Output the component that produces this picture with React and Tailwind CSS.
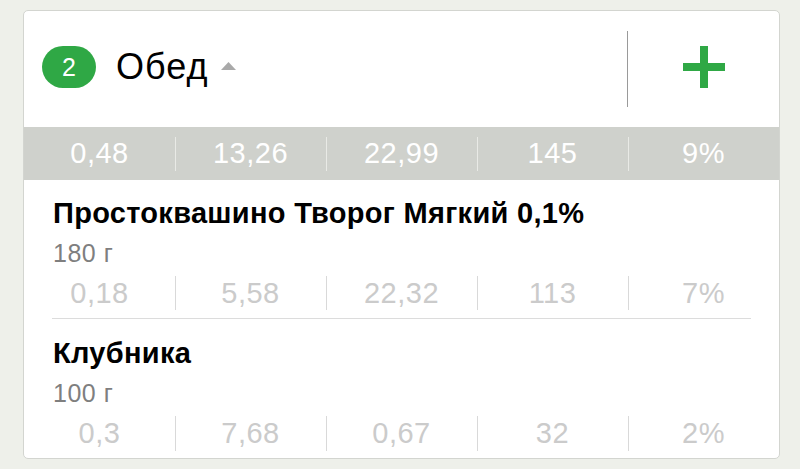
import React from "react";

const cols = (vals, textCls, divCls, h) => (
  <div className={`flex ${h}`}>
    {vals.map((v, i) => (
      <div key={i} className="flex-1 relative flex items-center justify-center">
        {i > 0 && <div className={`absolute left-0 top-0 bottom-0 w-px ${divCls}`} />}
        <span className={textCls}>{v}</span>
      </div>
    ))}
  </div>
);

function Item({ name, weight, vals, pt, rowH, last }) {
  return (
    <div>
      <div className={`${pt} pl-[29px]`}>
        <div className="text-[29px] leading-[32px] font-bold tracking-[0.3px] text-black">{name}</div>
        <div className="mt-[10px] text-[25px] leading-[28px] tracking-[0.5px] text-[#7f7f7f]">{weight}</div>
      </div>
      <div className="mt-[9px]">
        {cols(vals, "text-[29px] leading-none tracking-[0.5px] text-[#cbcbcb]", "bg-[#d9d9d9]", rowH)}
      </div>
      {!last && <div className="mt-[8px] mx-[28px] h-px bg-[#dcdcdc]" />}
    </div>
  );
}

export default function App() {
  return (
    <div className="w-[800px] h-[469px] bg-[#eef0ea] pl-[23px] pt-[10px]" style={{ fontFamily: '"Liberation Sans", Arial, sans-serif' }}>
      <div className="w-[757px] h-[449px] bg-white border border-[#d3d5d0] rounded-[5px] overflow-hidden">
        <div className="h-[116px] flex items-center pb-[4px]">
          <div className="flex-1 flex items-center pl-[18px]">
            <div className="w-[54px] h-[42px] rounded-full bg-[#2fa845] flex items-center justify-center text-white text-[25px] leading-none">2</div>
            <div className="ml-[20px] text-[36px] leading-none text-black tracking-[1px]">Обед</div>
            <svg width="15" height="8" viewBox="0 0 15 8" className="ml-[13px] mt-[-2px]">
              <polygon points="7.5,0 15,8 0,8" fill="#a9a9a9" />
            </svg>
          </div>
          <div className="w-px h-[76px] bg-[#9a9a9a] mt-[4px]" />
          <div className="w-[151px] flex items-center justify-center">
            <svg width="42" height="42" viewBox="0 0 42 42">
              <rect x="0" y="17" width="42" height="8" fill="#2fa845" />
              <rect x="17" y="0" width="8" height="42" fill="#2fa845" />
            </svg>
          </div>
        </div>
        <div className="h-[53px] bg-[#cfd1cc] flex flex-col justify-center">
          {cols(["0,48", "13,26", "22,99", "145", "9%"], "text-[29px] leading-none tracking-[0.5px] text-white", "bg-[#e9eae6]", "h-[34px]")}
        </div>
        <Item name="Простоквашино Творог Мягкий 0,1%" weight="180 г" vals={["0,18", "5,58", "22,32", "113", "7%"]} pt="pt-[17px]" rowH="h-[34px]" />
        <Item name="Клубника" weight="100 г" vals={["0,3", "7,68", "0,67", "32", "2%"]} pt="pt-[18px]" rowH="h-[35px]" last />
      </div>
    </div>
  );
}
